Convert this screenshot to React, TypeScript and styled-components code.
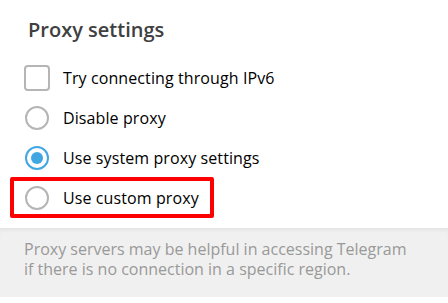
import React from "react";
import styled, { createGlobalStyle } from "styled-components";

const Global = createGlobalStyle`
  html, body { margin: 0; padding: 0; background: #ffffff; }
  body { font-family: "Open Sans", "Noto Sans", sans-serif; width: 448px; height: 303px; overflow: hidden; }
`;

const Page = styled.div`
  width: 448px;
  height: 303px;
  display: flex;
  flex-direction: column;
  background: #ffffff;
`;

const Section = styled.section`
  height: 228px;
  box-sizing: border-box;
  padding: 13px 0 0 0;
  display: flex;
  flex-direction: column;
  flex: none;
`;

const Title = styled.h2`
  margin: 0 0 11px 28px;
  font-size: 20px;
  line-height: 34px;
  font-weight: 600;
  color: #404040;
`;

const Row = styled.label<{ $highlight?: boolean }>`
  position: relative;
  height: 40px;
  flex: none;
  display: flex;
  align-items: center;
  padding-left: 24px;
  gap: 13px;
  font-size: 16px;
  letter-spacing: 0.1px;
  color: #000000;
  cursor: pointer;

  ${(p) =>
    p.$highlight &&
    `
    &::after {
      content: "";
      position: absolute;
      left: 10px;
      top: -1px;
      width: 204px;
      height: 41px;
      box-sizing: border-box;
      border: 4px solid #ff0000;
      border-radius: 2px;
    }
  `}
`;

const Slot = styled.span`
  width: 26px;
  height: 26px;
  display: flex;
  align-items: center;
  justify-content: center;
  flex: none;
`;

const CheckBox = styled.span`
  width: 26px;
  height: 26px;
  box-sizing: border-box;
  border: 2px solid #b5b5b5;
  border-radius: 4px;
`;

const Radio = styled.span<{ $checked?: boolean }>`
  width: 24px;
  height: 24px;
  box-sizing: border-box;
  border-radius: 50%;
  border: 2px solid ${(p) => (p.$checked ? "#40a7e3" : "#b5b5b5")};
  display: flex;
  align-items: center;
  justify-content: center;

  &::before {
    content: "";
    width: 12px;
    height: 12px;
    border-radius: 50%;
    background: ${(p) => (p.$checked ? "#40a7e3" : "transparent")};
  }
`;

const Footer = styled.div`
  flex: none;
  height: 69px;
  box-sizing: border-box;
  background: #f0f0f0;
  box-shadow: inset 0 4px 4px -2px rgba(0, 0, 0, 0.06);
  padding: 11px 24px 0 24px;
  font-size: 16px;
  line-height: 20px;
  color: #999999;
`;

const options = [
  { label: "Disable proxy", checked: false },
  { label: "Use system proxy settings", checked: true },
  { label: "Use custom proxy", checked: false, highlight: true },
];

export default function App() {
  return (
    <Page>
      <Global />
      <Section>
        <Title>Proxy settings</Title>
        <Row>
          <Slot>
            <CheckBox />
          </Slot>
          Try connecting through IPv6
        </Row>
        {options.map((o) => (
          <Row key={o.label} $highlight={o.highlight}>
            <Slot>
              <Radio $checked={o.checked} />
            </Slot>
            {o.label}
          </Row>
        ))}
      </Section>
      <Footer>
        Proxy servers may be helpful in accessing Telegram
        <br />
        if there is no connection in a specific region.
      </Footer>
    </Page>
  );
}
